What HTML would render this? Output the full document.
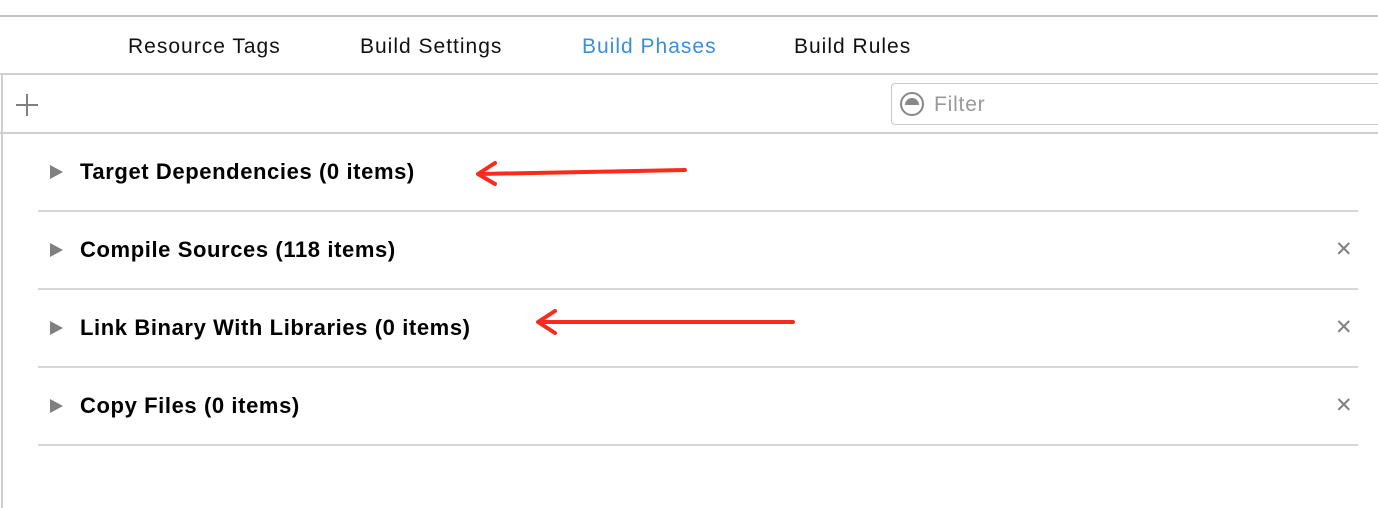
<!DOCTYPE html>
<html><head><style>
body{margin:0;width:1378px;height:508px;background:#fff;position:relative;overflow:hidden;font-family:"Liberation Sans",Arial,sans-serif;}
.a{position:absolute}
.tab{position:absolute;top:35px;font-size:21px;letter-spacing:1px;color:#111;}
.row{position:absolute;left:80px;font-size:22px;letter-spacing:0.6px;font-weight:bold;color:#000;}
.tri{position:absolute;left:50px;width:0;height:0;border-top:7px solid transparent;border-bottom:7px solid transparent;border-left:13px solid #808080;}
.sep{position:absolute;left:38px;width:1320px;height:2px;background:#d6d6d6;}
.x{position:absolute;left:1335px;font-size:21px;color:#808080;}
</style></head><body>
<div class="a" style="top:15px;left:0;width:1378px;height:2px;background:#c4c4c4"></div>
<div class="tab" style="left:128px">Resource Tags</div>
<div class="tab" style="left:360px">Build Settings</div>
<div class="tab" style="left:582px;color:#3b8fd9">Build Phases</div>
<div class="tab" style="left:794px">Build Rules</div>
<div class="a" style="top:73px;left:0;width:1378px;height:2px;background:#cfcfcf"></div>
<div class="a" style="top:73px;left:1px;width:2px;height:435px;background:#cfcfcf"></div>
<div class="a" style="top:132px;left:0;width:1378px;height:2px;background:#cfcfcf"></div>
<div class="a" style="top:104px;left:16px;width:22px;height:2px;background:#808080"></div>
<div class="a" style="top:94px;left:26px;width:2px;height:22px;background:#808080"></div>
<div class="a" style="top:83px;left:891px;width:500px;height:40px;border:1px solid #c8c8c8;border-radius:4px"></div>
<svg class="a" style="left:899px;top:91px" width="28" height="28"><circle cx="13" cy="13" r="11" fill="none" stroke="#888" stroke-width="2"/><path d="M6 14 A7 7 0 0 1 20 14 Z" fill="#888"/></svg>
<div class="a" style="left:934px;top:93px;font-size:21px;letter-spacing:0.8px;color:#999">Filter</div>
<div class="tri" style="top:165px"></div><div class="row" style="top:159px">Target Dependencies (0 items)</div>
<div class="sep" style="top:210px"></div>
<div class="tri" style="top:243px"></div><div class="row" style="top:237px">Compile Sources (118 items)</div><div class="x" style="top:237px">✕</div>
<div class="sep" style="top:288px"></div>
<div class="tri" style="top:321px"></div><div class="row" style="top:315px">Link Binary With Libraries (0 items)</div><div class="x" style="top:315px">✕</div>
<div class="sep" style="top:366px"></div>
<div class="tri" style="top:399px"></div><div class="row" style="top:393px">Copy Files (0 items)</div><div class="x" style="top:393px">✕</div>
<div class="sep" style="top:444px"></div>
<svg class="a" style="left:0;top:0" width="1378" height="508">
<g stroke="#fb2a1c" stroke-width="4" fill="none" stroke-linecap="round" stroke-linejoin="round">
<path d="M685 170 L480 174"/><path d="M495 163 L478 174 L495 184"/>
<path d="M793 322 L540 322"/><path d="M555 311 L538 322 L555 333"/>
</g></svg>
</body></html>
